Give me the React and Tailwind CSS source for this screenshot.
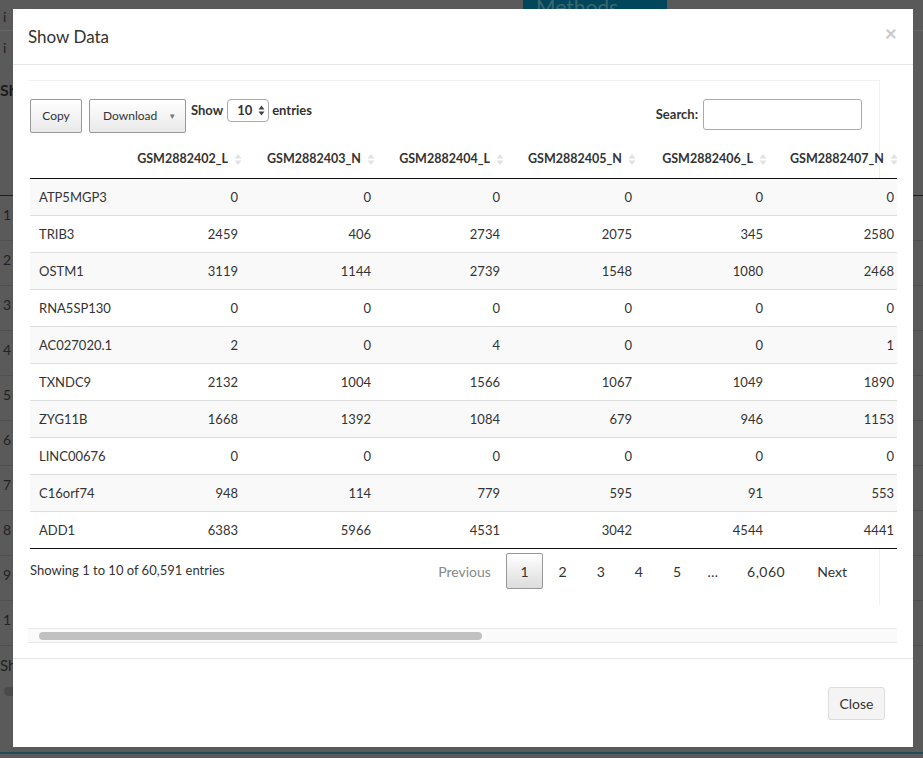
import React from 'react'

const columns = [
  { label: '', w: 'w-[98px]' },
  { label: 'GSM2882402_L', w: 'w-[120px]' },
  { label: 'GSM2882403_N', w: 'w-[133px]' },
  { label: 'GSM2882404_L', w: 'w-[129px]' },
  { label: 'GSM2882405_N', w: 'w-[132px]' },
  { label: 'GSM2882406_L', w: 'w-[131px]' },
  { label: 'GSM2882407_N', w: 'w-[131px]' },
]

const rows = [
  ['ATP5MGP3', 0, 0, 0, 0, 0, 0],
  ['TRIB3', 2459, 406, 2734, 2075, 345, 2580],
  ['OSTM1', 3119, 1144, 2739, 1548, 1080, 2468],
  ['RNA5SP130', 0, 0, 0, 0, 0, 0],
  ['AC027020.1', 2, 0, 4, 0, 0, 1],
  ['TXNDC9', 2132, 1004, 1566, 1067, 1049, 1890],
  ['ZYG11B', 1668, 1392, 1084, 679, 946, 1153],
  ['LINC00676', 0, 0, 0, 0, 0, 0],
  ['C16orf74', 948, 114, 779, 595, 91, 553],
  ['ADD1', 6383, 5966, 4531, 3042, 4544, 4441],
]

const SortIcon = () => (
  <svg width="8" height="13" viewBox="0 0 8 13" className="ml-[6px] shrink-0">
    <path d="M4 1 L7.5 5.5 H0.5 Z" fill="#e2e2e2" />
    <path d="M4 12 L7.5 7.5 H0.5 Z" fill="#e2e2e2" />
  </svg>
)

const SelectArrows = () => (
  <svg width="7" height="11" viewBox="0 0 7 11" className="ml-[6px]">
    <path d="M3.5 0.5 L6.5 4.5 H0.5 Z" fill="#444" />
    <path d="M3.5 10.5 L6.5 6.5 H0.5 Z" fill="#444" />
  </svg>
)

const Background = () => (
  <div className="flex h-full flex-col text-[#1a1a1a]">
    <div className="flex h-[31px] border-b border-[#666]">
      <div className="w-[13px] pl-[3px] pt-[6px] text-[14px] text-[#222]">i</div>
      <div className="ml-[510px] h-[9px] w-[144px] overflow-hidden bg-[#01465a] pl-[13px]">
        <div className="-mt-[4px] text-[21px] leading-none text-[#3d6770]">Methods</div>
      </div>
    </div>
    <div className="h-[33px] pl-[3px] pt-[6px] text-[14px] text-[#222]">i</div>
    <div className="mt-[18px] text-[16px] font-bold leading-none">Sh</div>
    <div className="h-[98px] border-b border-[#1e1e1e]" />
    {[1, 2, 3, 4, 5, 6, 7, 8, 9, 1].map((n, i) => (
      <div key={i} className="h-[45px] border-b border-[#505050] pl-[3px] pt-[9px] text-[14px] leading-[20px] text-[#222]">
        {n}
      </div>
    ))}
    <div className="mt-[12px] text-[15px] leading-none text-[#222]">Sh</div>
    <div className="ml-[4px] mt-[14px] h-[9px] w-[40px] rounded-full bg-[#4a4a4a]" />
    <div className="mt-auto h-[6px] border-t-2 border-[#1e4d58]" />
  </div>
)

export default function App() {
  return (
    <div className="relative h-[758px] w-[923px] overflow-hidden bg-[#5a5a5a] font-['Lato',sans-serif]">
      <Background />

      <div className="absolute left-[13px] top-[9px] flex h-[738px] w-[900px] flex-col bg-white text-[#333]">
        {/* header */}
        <div className="flex h-[56px] items-center justify-between border-b border-[#e5e5e5] pl-[15px] pr-[16px]">
          <h4 className="text-[17px]">Show Data</h4>
          <span className="mb-[8px] text-[21px] font-bold leading-none text-[#c8c8c8]">×</span>
        </div>

        {/* body */}
        <div className="h-[593px] p-[15px]">
          <div className="w-[869px] overflow-hidden">
            <div className="h-[525px] w-[852px] border-r border-t border-[#f0f0f0] pl-[2px] pt-[18px]">
              {/* controls */}
              <div className="flex h-[34px] w-[832px] items-start justify-between text-[13px]">
                <div className="flex items-start">
                  <button className="h-[34px] w-[52px] rounded-[2px] border border-[#999] bg-gradient-to-b from-white to-[#e9e9e9] text-[12px]">
                    Copy
                  </button>
                  <button className="ml-[7px] flex h-[34px] w-[97px] items-center rounded-[2px] border border-[#999] bg-gradient-to-b from-white to-[#e9e9e9] pl-[13px] text-[12px]">
                    Download
                    <span className="ml-[11px] text-[8px] text-[#777]">▼</span>
                  </button>
                  <label className="ml-[5px] flex items-center font-bold">
                    Show
                    <span className="ml-[4px] flex h-[23px] w-[42px] items-center rounded-[4px] border border-[#aaa] pl-[9px]">
                      10
                      <SelectArrows />
                    </span>
                    <span className="ml-[3px]">entries</span>
                  </label>
                </div>
                <label className="flex items-center font-bold">
                  Search:
                  <span className="ml-[5px] block h-[31px] w-[159px] rounded-[3px] border border-[#aaa]" />
                </label>
              </div>

              {/* table */}
              <div className="mt-[7px] w-[874px] text-[13px]">
                <div className="flex h-[39px] border-b border-[#111] text-[12.5px] font-bold">
                  {columns.map((c, i) => (
                    <div key={i} className={`${c.w} flex items-center justify-end pr-[6px]`}>
                      {c.label && (
                        <>
                          {c.label}
                          <SortIcon />
                        </>
                      )}
                    </div>
                  ))}
                </div>
                {rows.map((r, ri) => (
                  <div
                    key={ri}
                    className={`flex h-[37px] border-b pt-[2px] ${ri === rows.length - 1 ? 'border-[#111]' : 'border-[#ddd]'} ${ri % 2 === 0 ? 'bg-[#f9f9f9]' : 'bg-white'}`}
                  >
                    {r.map((v, ci) => (
                      <div
                        key={ci}
                        className={`${columns[ci].w} flex items-center ${ci === 0 ? 'pl-[9px]' : 'justify-end pr-[10px]'}`}
                      >
                        {v}
                      </div>
                    ))}
                  </div>
                ))}
              </div>

              {/* info + pagination */}
              <div className="mt-[4px] flex w-[832px] items-center justify-between">
                <div className="text-[13px]">Showing 1 to 10 of 60,591 entries</div>
                <div className="flex items-center text-[14px]">
                  <span className="flex h-[36px] items-center border border-transparent px-[12px] text-[#888]">Previous</span>
                  <span className="ml-[2px] flex h-[36px] items-center rounded-[2px] border border-[#979797] bg-gradient-to-b from-white to-[#dcdcdc] px-[13.5px]">
                    1
                  </span>
                  {['2', '3', '4', '5'].map((p) => (
                    <span key={p} className="ml-[1px] flex h-[36px] items-center border border-transparent px-[13.5px]">
                      {p}
                    </span>
                  ))}
                  <span className="flex h-[36px] items-center px-[12px]">…</span>
                  <span className="ml-[2px] flex h-[36px] items-center border border-transparent px-[14px] tracking-[0.5px]">6,060</span>
                  <span className="ml-[2px] flex h-[36px] items-center border border-transparent px-[14px]">Next</span>
                </div>
              </div>
            </div>

            {/* horizontal scrollbar */}
            <div className="mt-[23px] h-[15px] border-y border-[#e8e8e8] bg-[#fafafa]">
              <div className="ml-[11px] mt-[3px] h-[8px] w-[443px] rounded-full bg-[#c1c1c1]" />
            </div>
          </div>
        </div>

        {/* footer */}
        <div className="flex flex-1 items-center justify-end border-t border-[#e5e5e5] pr-[28px]">
          <button className="h-[33px] w-[57px] rounded-[3px] border border-[#ddd] bg-[#f4f4f4] text-[14px] text-[#333]">
            Close
          </button>
        </div>
      </div>
    </div>
  )
}
